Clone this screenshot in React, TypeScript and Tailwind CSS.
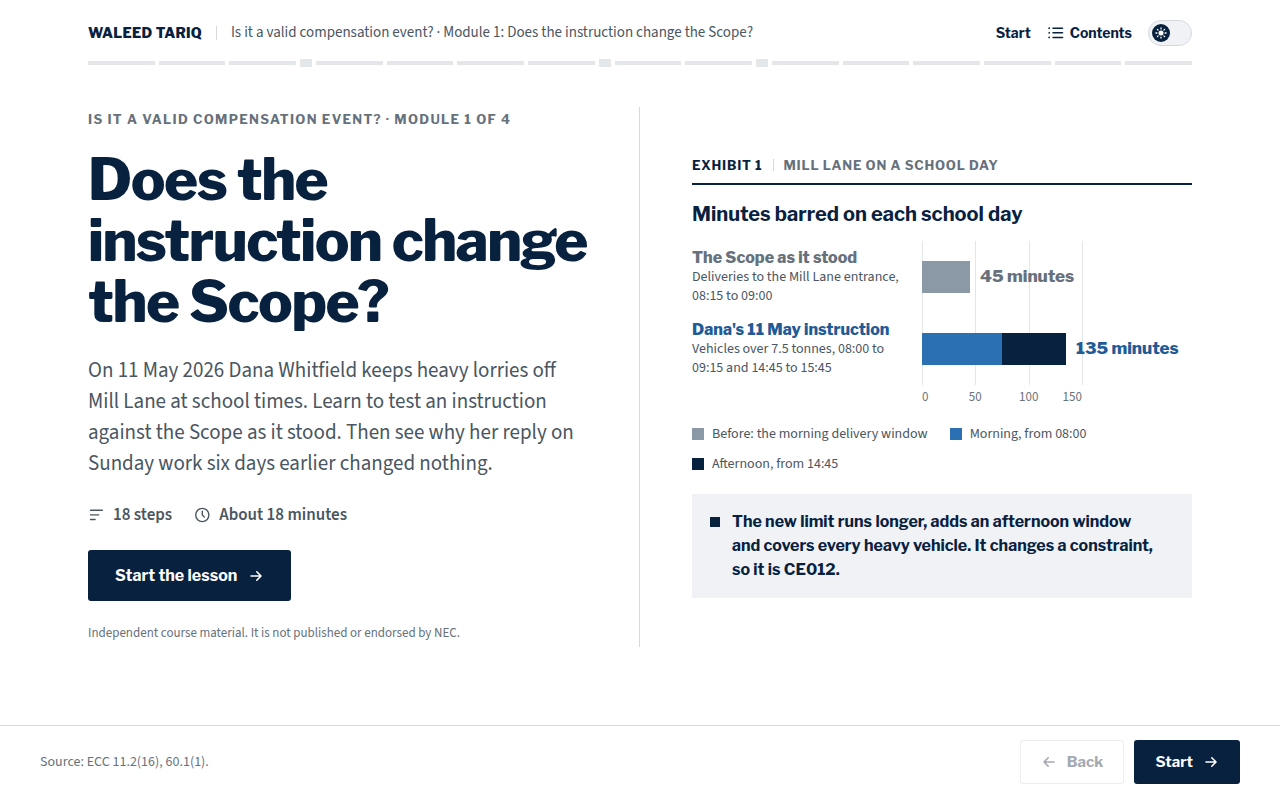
import { useState } from "react";

const HEAD = "font-['Libre_Franklin',Inter,'Liberation_Sans',sans-serif]";
const BODY = "font-['Source_Sans_3','Noto_Sans_CJK_SC','Open_Sans',sans-serif]";

type Mark = "step" | "gate";

const marks: Mark[] = [
  "step", "step", "step", "gate",
  "step", "step", "step", "step", "gate",
  "step", "step", "gate",
  "step", "step", "step", "step", "step", "step",
];

const AXIS_MAX = 150;

const rows = [
  {
    name: "The Scope as it stood",
    note: "Deliveries to the Mill Lane entrance, 08:15 to 09:00",
    total: "45 minutes",
    tone: "text-[#66717c]",
    parts: [{ minutes: 45, fill: "bg-[#8b98a5]" }],
  },
  {
    name: "Dana's 11 May instruction",
    note: "Vehicles over 7.5 tonnes, 08:00 to 09:15 and 14:45 to 15:45",
    total: "135 minutes",
    tone: "text-[#1f5c97]",
    parts: [
      { minutes: 75, fill: "bg-[#2a70b2]" },
      { minutes: 60, fill: "bg-[#08213f]" },
    ],
  },
];

const legend = [
  { label: "Before: the morning delivery window", fill: "bg-[#8b98a5]" },
  { label: "Morning, from 08:00", fill: "bg-[#2a70b2]" },
  { label: "Afternoon, from 14:45", fill: "bg-[#08213f]" },
];

function ArrowIcon({ back = false }: { back?: boolean }) {
  return (
    <svg className="size-4" viewBox="0 0 16 16" fill="none" stroke="currentColor" strokeWidth="1.6" strokeLinecap="round" strokeLinejoin="round" aria-hidden="true">
      <path d={back ? "M13 8H3M7.2 3.8 3 8l4.2 4.2" : "M3 8h10M8.8 3.8 13 8l-4.2 4.2"} />
    </svg>
  );
}

function ListIcon() {
  return (
    <svg className="size-4" viewBox="0 0 16 16" fill="none" stroke="currentColor" strokeWidth="1.5" strokeLinecap="round" aria-hidden="true">
      <path d="M5 3.2H14.5M5 7.8H14.5M5 12.4H14.5" />
      <path strokeWidth="1.8" d="M1.2 3.2h.01M1.2 7.8h.01M1.2 12.4h.01" />
    </svg>
  );
}

function StepsIcon() {
  return (
    <svg className="size-4" viewBox="0 0 16 16" fill="none" stroke="currentColor" strokeWidth="1.4" strokeLinecap="round" aria-hidden="true">
      <path d="M2.5 3.3h11.8M2.5 7.9h8.2M2.5 12.5h4.6" />
    </svg>
  );
}

function ClockIcon() {
  return (
    <svg className="size-4" viewBox="0 0 16 16" fill="none" stroke="currentColor" strokeWidth="1.4" strokeLinecap="round" strokeLinejoin="round" aria-hidden="true">
      <circle cx="8.3" cy="8" r="6.6" />
      <path d="M8.3 4.3V8l2 1.9" />
    </svg>
  );
}

function SunIcon() {
  return (
    <svg className="size-3.5" viewBox="0 0 14 14" fill="none" stroke="white" strokeWidth="1.3" strokeLinecap="round" aria-hidden="true">
      <circle cx="7" cy="7" r="2.5" fill="white" stroke="none" />
      <path d="M7 1.9v1M7 11.1v1M1.9 7h1M11.1 7h1M3.4 3.4l.7.7M9.9 9.9l.7.7M3.4 10.6l.7-.7M9.9 4.1l.7-.7" />
    </svg>
  );
}

function ThemeSwitch() {
  const [dark, setDark] = useState(false);
  return (
    <button
      type="button"
      role="switch"
      aria-checked={dark}
      aria-label="Dark theme"
      onClick={() => setDark(!dark)}
      className={`flex h-[26px] w-11 items-center rounded-full border border-[#d5d9de] bg-[#f0f2f6] px-[3px] ${dark ? "justify-end" : "justify-start"}`}
    >
      <span className="flex size-[18px] items-center justify-center rounded-full bg-[#08213f]">
        <SunIcon />
      </span>
    </button>
  );
}

function Header() {
  return (
    <header className="px-[88px] pt-5">
      <div className="flex h-[26px] items-center justify-between">
        <div className="flex items-center">
          <span className={`text-[14px] leading-5 font-extrabold tracking-[0.02em] text-[#08213f] ${HEAD}`}>WALEED TARIQ</span>
          <span className="mx-3.5 h-3.5 w-px bg-[#d5d9de]" />
          <span className="text-[15px] leading-5 text-[#4a5662]">
            Is it a valid compensation event? · Module 1: Does the instruction change the Scope?
          </span>
        </div>
        <nav className={`flex items-center text-[14px] leading-5 font-bold text-[#08213f] ${HEAD}`}>
          <a href="#start">Start</a>
          <button type="button" className="ml-[17px] flex items-center gap-1.5 font-bold">
            <ListIcon />
            Contents
          </button>
          <span className="ml-4 flex">
            <ThemeSwitch />
          </span>
        </nav>
      </div>
      <div className="mt-[13px] flex h-2 items-center gap-1">
        {marks.map((mark, i) => (
          <span key={i} className={mark === "gate" ? "h-2 w-3 bg-[#e4e7e9]" : "h-1 flex-1 bg-[#e4e7e9]"} />
        ))}
      </div>
    </header>
  );
}

function Intro() {
  return (
    <section id="start" className="border-r border-[#d5d9de] pr-[50px] pb-0.5">
      <p className={`text-[13px] leading-6 font-bold tracking-widest text-[#66717c] uppercase ${HEAD}`}>
        Is it a valid compensation event? · Module 1 of 4
      </p>
      <h1 className={`mt-[18px] text-[58px] leading-[61px] font-extrabold tracking-tight text-[#08213f] ${HEAD}`}>
        Does the instruction change the Scope?
      </h1>
      <p className="mt-[23px] text-[21px] leading-[31px] text-[#4a5662]">
        On 11 May 2026 Dana Whitfield keeps heavy lorries off Mill Lane at school times. Learn to test an instruction
        against the Scope as it stood. Then see why her reply on Sunday work six days earlier changed nothing.
      </p>
      <ul className="mt-6 flex gap-[22px] text-[17px] leading-6 font-semibold text-[#4a5662]">
        <li className="flex items-center gap-[9px]">
          <StepsIcon />
          18 steps
        </li>
        <li className="flex items-center gap-[9px]">
          <ClockIcon />
          About 18 minutes
        </li>
      </ul>
      <button type="button" className={`mt-[23px] flex h-[51px] items-center gap-[11px] rounded-[3px] bg-[#08213f] px-[27px] text-[16px] font-bold text-white ${HEAD}`}>
        Start the lesson
        <ArrowIcon />
      </button>
      <p className="mt-5 text-[13px] leading-6 text-[#66717c]">
        Independent course material. It is not published or endorsed by NEC.
      </p>
    </section>
  );
}

function Chart() {
  return (
    <div className="mt-3.5 grid grid-cols-[230px_1fr]">
      <div>
        {rows.map((row) => (
          <div key={row.name} className="flex h-[72px] flex-col justify-center pr-5">
            <h3 className={`text-[16px] leading-5 font-extrabold ${row.tone} ${HEAD}`}>{row.name}</h3>
            <p className="text-[14px] leading-[19px] text-[#4a5662]">{row.note}</p>
          </div>
        ))}
      </div>
      <div className="relative pr-[110px]">
        <div className="absolute inset-y-0 right-[109px] left-0 grid grid-cols-3 border-r border-[#e4e7e9]" aria-hidden="true">
          <span className="border-l border-[#e4e7e9]" />
          <span className="border-l border-[#e4e7e9]" />
          <span className="border-l border-[#e4e7e9]" />
        </div>
        {rows.map((row) => (
          <div key={row.name} className="relative flex h-[72px] items-center">
            {row.parts.map((part) => (
              <span
                key={part.fill}
                className={`h-8 shrink-0 ${part.fill}`}
                style={{ width: `${(part.minutes / AXIS_MAX) * 100}%` }}
              />
            ))}
            <span className={`ml-2.5 text-[17px] font-extrabold whitespace-nowrap ${row.tone} ${HEAD}`}>{row.total}</span>
          </div>
        ))}
      </div>
      <div className="col-start-2 mt-[3px] flex pr-[110px] text-center text-[13px] leading-[18px] text-[#66717c]">
        <span className="w-1/6 text-left">0</span>
        <span className="w-1/3">50</span>
        <span className="w-1/3">100</span>
        <span className="w-1/6 text-right">150</span>
      </div>
    </div>
  );
}

function Exhibit() {
  return (
    <section className="self-center pb-0.5 pl-[52px]">
      <div className={`flex items-center border-b-2 border-[#08213f] pb-2 text-[13px] leading-5 font-bold tracking-[0.06em] uppercase ${HEAD}`}>
        <span className="text-[#08213f]">Exhibit 1</span>
        <span className="mx-2.5 h-3 w-px bg-[#d5d9de]" />
        <span className="text-[#66717c]">Mill Lane on a school day</span>
      </div>
      <h2 className={`mt-4 text-[20px] leading-[26px] font-bold text-[#08213f] ${HEAD}`}>Minutes barred on each school day</h2>
      <Chart />
      <ul className="mt-[17px] flex flex-wrap gap-x-[22px] gap-y-2 text-[14px] leading-[22px] text-[#4a5662]">
        {legend.map((item) => (
          <li key={item.label} className="flex items-center gap-2">
            <span className={`size-3 ${item.fill}`} />
            {item.label}
          </li>
        ))}
      </ul>
      <div className="mt-[19px] flex gap-3 bg-[#f0f2f6] py-4 pr-9 pl-[18px]">
        <span className="mt-[7px] size-2.5 shrink-0 bg-[#08213f]" />
        <p className={`text-[16px] leading-6 font-bold text-[#08213f] ${HEAD}`}>
          The new limit runs longer, adds an afternoon window and covers every heavy vehicle. It changes a constraint,
          so it is CE012.
        </p>
      </div>
    </section>
  );
}

function Footer() {
  return (
    <footer className="flex items-center justify-between border-t border-[#d5d9de] px-10 pt-3.5 pb-4">
      <p className="text-[14px] leading-5 text-[#66717c]">Source: ECC 11.2(16), 60.1(1).</p>
      <div className={`flex gap-2.5 text-[15px] font-bold ${HEAD}`}>
        <button type="button" disabled className="flex h-11 items-center gap-2.5 rounded-[3px] border border-[#eceef0] px-5 text-[#a4a9b1]">
          <ArrowIcon back />
          Back
        </button>
        <button type="button" className="flex h-11 items-center gap-2.5 rounded-[3px] bg-[#08213f] px-[21px] text-white">
          Start
          <ArrowIcon />
        </button>
      </div>
    </footer>
  );
}

export default function App() {
  return (
    <div className={`flex min-h-screen flex-col bg-white ${BODY}`}>
      <Header />
      <main className="grid flex-1 grid-cols-2 content-start px-[88px] pt-10 pb-10">
        <Intro />
        <Exhibit />
      </main>
      <Footer />
    </div>
  );
}
